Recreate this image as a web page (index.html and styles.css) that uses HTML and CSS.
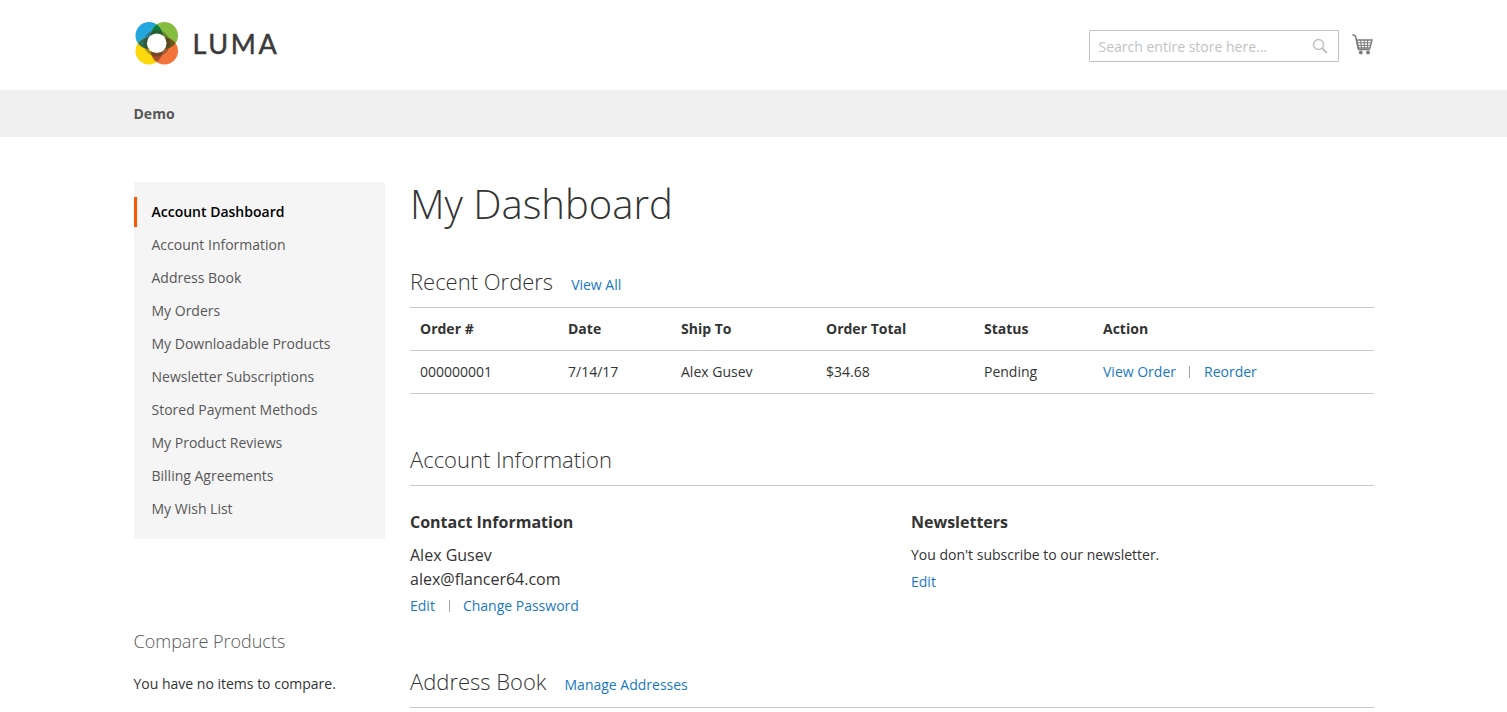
FILE: index.html
```html
<!DOCTYPE html>
<html lang="en">
<head>
<meta charset="utf-8">
<title>My Dashboard</title>
<link rel="stylesheet" href="styles.css">
</head>
<body>
<header class="site-header">
  <div class="wrap header-row">
    <a class="logo" href="#">
      <svg class="logo-mark" width="45" height="45" viewBox="0 0 45 45">
        <defs>
          <clipPath id="cb"><circle cx="15" cy="14.5" r="13.5"/></clipPath>
          <clipPath id="co"><circle cx="30.5" cy="30" r="13.5"/></clipPath>
        </defs>
        <circle cx="15" cy="14.5" r="13.5" fill="#23a6dc"/>
        <circle cx="30.5" cy="14.5" r="13.5" fill="#86bd40"/>
        <circle cx="15" cy="30" r="13.5" fill="#fcd90f"/>
        <circle cx="30.5" cy="30" r="13.5" fill="#f3743a"/>
        <g clip-path="url(#cb)"><circle cx="30.5" cy="14.5" r="13.5" fill="#0f7a3e"/></g>
        <g clip-path="url(#cb)"><circle cx="15" cy="30" r="13.5" fill="#2f6d5c"/></g>
        <g clip-path="url(#co)"><circle cx="30.5" cy="14.5" r="13.5" fill="#6a5520"/></g>
        <g clip-path="url(#co)"><circle cx="15" cy="30" r="13.5" fill="#a8502a"/></g>
        <circle cx="22.75" cy="22.25" r="13.2" fill="#3c3c1e" fill-opacity="0.45"/>
        <circle cx="22.75" cy="22.25" r="9.8" fill="#fff"/>
      </svg>
      <span class="logo-text">LUMA</span>
    </a>
    <div class="header-tools">
      <div class="search">
        <span class="search-placeholder">Search entire store here...</span>
        <svg class="search-icon" width="16" height="16" viewBox="0 0 16 16" fill="none" stroke="#c2c2c2">
          <circle cx="6.5" cy="6.5" r="5" stroke-width="1.5"/>
          <path d="M10.2 10.2 L15 15" stroke-width="2"/>
        </svg>
      </div>
      <svg class="cart" width="21" height="21" viewBox="0 0 21 21" fill="none" stroke="#7b7b7b">
        <path d="M0.5 0.5 L3.5 2 L6.5 15.5 H18" stroke-width="1.5"/>
        <path d="M4.5 6 H20 L18 14 H6.3Z" stroke-width="1.4"/>
        <path d="M5 8.8 H19.4 M6 11.4 H18.8 M8.7 6 L9.4 14 M12.2 6 L12.4 14 M15.7 6 L15.3 14" stroke-width="1"/>
        <circle cx="8.8" cy="18.5" r="1.9" fill="#7b7b7b" stroke="none"/>
        <circle cx="16" cy="18.5" r="1.9" fill="#7b7b7b" stroke="none"/>
      </svg>
    </div>
  </div>
</header>

<nav class="top-nav">
  <div class="wrap"><a class="top-nav-link" href="#">Demo</a></div>
</nav>

<div class="wrap page">
  <aside class="sidebar">
    <ul class="account-nav">
      <li class="current"><strong>Account Dashboard</strong></li>
      <li><a href="#">Account Information</a></li>
      <li><a href="#">Address Book</a></li>
      <li><a href="#">My Orders</a></li>
      <li><a href="#">My Downloadable Products</a></li>
      <li><a href="#">Newsletter Subscriptions</a></li>
      <li><a href="#">Stored Payment Methods</a></li>
      <li><a href="#">My Product Reviews</a></li>
      <li><a href="#">Billing Agreements</a></li>
      <li><a href="#">My Wish List</a></li>
    </ul>
    <div class="compare">
      <div class="compare-title">Compare Products</div>
      <p class="compare-empty">You have no items to compare.</p>
    </div>
  </aside>

  <main class="content">
    <h1 class="page-title">My Dashboard</h1>

    <div class="block-head orders-head">
      <span class="block-title">Recent Orders</span>
      <a class="block-link" href="#">View All</a>
    </div>
    <table class="orders">
      <thead>
        <tr>
          <th class="c-id">Order #</th>
          <th class="c-date">Date</th>
          <th class="c-ship">Ship To</th>
          <th class="c-total">Order Total</th>
          <th class="c-status">Status</th>
          <th>Action</th>
        </tr>
      </thead>
      <tbody>
        <tr>
          <td>000000001</td>
          <td>7/14/17</td>
          <td>Alex Gusev</td>
          <td>$34.68</td>
          <td>Pending</td>
          <td><a href="#">View Order</a><span class="sep"></span><a href="#">Reorder</a></td>
        </tr>
      </tbody>
    </table>

    <div class="block-head ruled info-head">
      <span class="block-title">Account Information</span>
    </div>
    <div class="info-cols">
      <section class="info-box">
        <h2 class="box-title">Contact Information</h2>
        <p class="contact">Alex Gusev<br>alex@flancer64.com</p>
        <div class="box-actions"><a href="#">Edit</a><span class="sep"></span><a href="#">Change Password</a></div>
      </section>
      <section class="info-box">
        <h2 class="box-title">Newsletters</h2>
        <p class="news">You don't subscribe to our newsletter.</p>
        <div class="box-actions news-actions"><a href="#">Edit</a></div>
      </section>
    </div>

    <div class="block-head ruled address-head">
      <span class="block-title">Address Book</span>
      <a class="block-link" href="#">Manage Addresses</a>
    </div>
  </main>
</div>
</body>
</html>
```
FILE: styles.css
```css
* { box-sizing: border-box; }
html, body { margin: 0; padding: 0; height: 712px; overflow: hidden; }
body {
  font-family: "Open Sans", sans-serif;
  font-size: 14px;
  line-height: 20px;
  color: #333;
  background: #fff;
}
a { color: #1979c3; text-decoration: none; }
p, h1, h2, ul { margin: 0; padding: 0; }
.wrap { width: 1240px; margin-left: 133.5px; }

.site-header { height: 90px; }
.header-row { display: flex; justify-content: space-between; align-items: flex-start; padding-top: 21px; }
.logo { display: flex; align-items: center; gap: 14px; color: #3a3a3a; }
.logo-mark { display: block; }
.logo-text { font-family: Lato, sans-serif; font-size: 27px; line-height: 43px; letter-spacing: 2.6px; font-weight: 400; -webkit-text-stroke: 0.5px #3a3a3a; }
.header-tools { display: flex; align-items: flex-start; padding-top: 9px; gap: 13px; }
.search {
  width: 250px; height: 32px; border: 1px solid #c2c2c2; border-radius: 1px;
  display: flex; align-items: center; justify-content: space-between;
  padding: 0 10px 0 9px; color: #c2c2c2; background: #fff;
}
.search-placeholder { font-size: 14px; position: relative; top: 1px; }
.cart { margin-top: 4px; margin-right: 1px; }

.top-nav { height: 47px; background: #f0f0f0; }
.top-nav-link { display: block; font-weight: 700; color: #575757; line-height: 47px; }

.page { display: flex; padding-top: 45px; }
.sidebar { width: 251px; flex: none; margin-right: 25.5px; }
.account-nav { list-style: none; background: #f5f5f5; padding: 15px 0; height: 357px; }
.account-nav li { height: 33px; padding-left: 18px; line-height: 30px; }
.account-nav a { color: #575757; }
.account-nav .current { color: #000; border-left: 3px solid #ff5501; padding-left: 15px; height: 30px; margin-bottom: 3px; }
.account-nav strong { font-weight: 600; }
.compare { margin-top: 90px; }
.compare-title { font-size: 18px; font-weight: 300; line-height: 24px; color: #575757; }
.compare-empty { margin-top: 21px; }

.content { width: 963.5px; flex: none; }
.page-title { font-size: 40px; font-weight: 300; line-height: 50px; color: #333; margin-top: -3px; }
.block-head { display: flex; align-items: baseline; }
.block-title { font-size: 22px; font-weight: 300; line-height: 28px; }
.block-link { margin-left: 18px; }
.orders-head { margin-top: 38px; height: 41px; }
.ruled { border-bottom: 1px solid #c6c6c6; }

.orders { width: 100%; border-collapse: collapse; table-layout: fixed; border-top: 1px solid #c6c6c6; margin-top: -1px; }
.orders th { text-align: left; font-weight: 700; padding: 11px 10px; height: 43px; }
.orders td { padding: 11px 10px; height: 43px; border-top: 1px solid #ccc; border-bottom: 1px solid #ccc; }
.c-id { width: 148px; }
.c-date { width: 113px; }
.c-ship { width: 145px; }
.c-total { width: 158px; }
.c-status { width: 119px; }
.sep { display: inline-block; width: 1px; height: 12px; background: #a6a6a6; margin: 0 15px 0 13px; vertical-align: -1px; }
.orders .sep { margin: 0 14px 0 13px; }

.info-head { margin-top: 51px; height: 41px; }
.info-cols { display: flex; margin-top: 26px; }
.info-box { width: 501px; flex: none; }
.box-title { font-size: 16px; font-weight: 700; line-height: 20px; }
.contact { font-size: 16px; line-height: 24px; margin-top: 11px; }
.box-actions { margin-top: 5px; }
.box-actions .sep { margin: 0 13px 0 14px; }
.news { margin-top: 13px; line-height: 20px; }
.news-actions { margin-top: 7px; }
.address-head { margin-top: 51px; height: 41px; }
```
